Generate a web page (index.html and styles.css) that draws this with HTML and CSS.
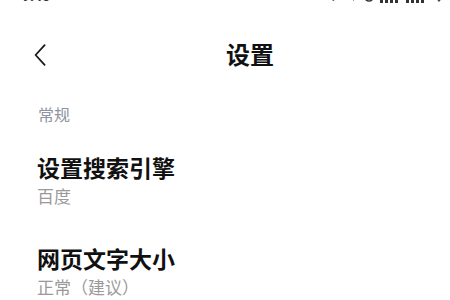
FILE: index.html
```html
<!DOCTYPE html>
<html lang="zh-CN">
<head>
<meta charset="utf-8">
<title>设置</title>
<link rel="stylesheet" href="styles.css">
</head>
<body>
<div class="screen">
  <div class="status">
    <span class="time">9:45</span>
    <div class="status-right">
      <span class="speed">0.00K/s</span>
      <svg class="sicon" width="8" height="14" viewBox="0 0 8 14"><path d="M1 2 L7 7 L4 10 L4 4 L7 7" fill="none" stroke="#333" stroke-width="1.6"/></svg>
      <svg class="sicon" width="10" height="14" viewBox="0 0 10 14"><circle cx="5" cy="8" r="4" fill="none" stroke="#333" stroke-width="1.6"/></svg>
      <svg class="sicon bars" width="20" height="14" viewBox="0 0 20 14"><rect x="0" y="10" width="3" height="4" fill="#333"/><rect x="5" y="7" width="3" height="7" fill="#333"/><rect x="10" y="4" width="3" height="10" fill="#333"/><rect x="15" y="1" width="3" height="13" fill="#333"/></svg>
      <svg class="sicon bars" width="20" height="14" viewBox="0 0 20 14"><rect x="0" y="10" width="3" height="4" fill="#333"/><rect x="5" y="7" width="3" height="7" fill="#333"/><rect x="10" y="4" width="3" height="10" fill="#333"/><rect x="15" y="1" width="3" height="13" fill="#333"/></svg>
      <svg class="sicon wifi" width="14" height="14" viewBox="0 0 14 14"><path d="M1 6 Q7 0 13 6 L7 13 Z" fill="#444"/></svg>
      <svg class="sicon" width="10" height="14" viewBox="0 0 10 14"><rect x="1" y="2" width="8" height="12" fill="#444"/></svg>
    </div>
  </div>

  <header class="header">
    <svg class="back" width="12" height="22" viewBox="0 0 12 22" aria-label="返回">
      <path d="M10.6 1.2 L1.6 11 L10.6 20.8" fill="none" stroke="#1a1a1a" stroke-width="1.8" stroke-linecap="round" stroke-linejoin="round"/>
    </svg>
    <h1 class="title">设置</h1>
  </header>

  <div class="section-label">常规</div>

  <div class="list">
    <div class="item">
      <div class="item-title">设置搜索引擎</div>
      <div class="item-sub">百度</div>
    </div>
    <div class="item">
      <div class="item-title">网页文字大小</div>
      <div class="item-sub">正常（建议）</div>
    </div>
  </div>
</div>
</body>
</html>
```

FILE: styles.css
```css
html, body {
  margin: 0;
  padding: 0;
  background: #ffffff;
}

body {
  font-family: "Noto Sans CJK SC", "Noto Sans", sans-serif;
  color: #111111;
  width: 450px;
  height: 300px;
  overflow: hidden;
}

.screen {
  display: flex;
  flex-direction: column;
  width: 450px;
}

.status {
  height: 14px;
  margin-top: -11px;
  display: flex;
  align-items: flex-end;
  justify-content: space-between;
  padding-left: 22px;
  color: #333333;
  font-family: "Roboto", "Liberation Sans", sans-serif;
  font-size: 14px;
  line-height: 14px;
  font-weight: 700;
  white-space: nowrap;
}

.status-right {
  display: flex;
  align-items: flex-end;
  gap: 6px;
  margin-right: -12px;
}

.speed {
  font-size: 13px;
  color: #555555;
}

.sicon {
  display: block;
}

.header {
  height: 101px;
  display: flex;
  align-items: center;
  padding-left: 34px;
}

.back {
  display: block;
  margin-top: 2px;
}

.title {
  margin: 0 0 0 180px;
  font-size: 24px;
  line-height: 30px;
  font-weight: 700;
  color: #111111;
}

.section-label {
  padding-left: 38px;
  font-size: 16px;
  line-height: 21px;
  color: #8d93a0;
}

.list {
  display: flex;
  flex-direction: column;
  gap: 36px;
  margin-top: 27px;
  padding-left: 37px;
}

.item {
  display: flex;
  flex-direction: column;
}

.item-title {
  font-size: 23px;
  line-height: 31px;
  font-weight: 700;
  color: #111111;
}

.item-sub {
  margin-top: 1px;
  font-size: 17px;
  line-height: 23px;
  color: #9a9a9a;
}
```
